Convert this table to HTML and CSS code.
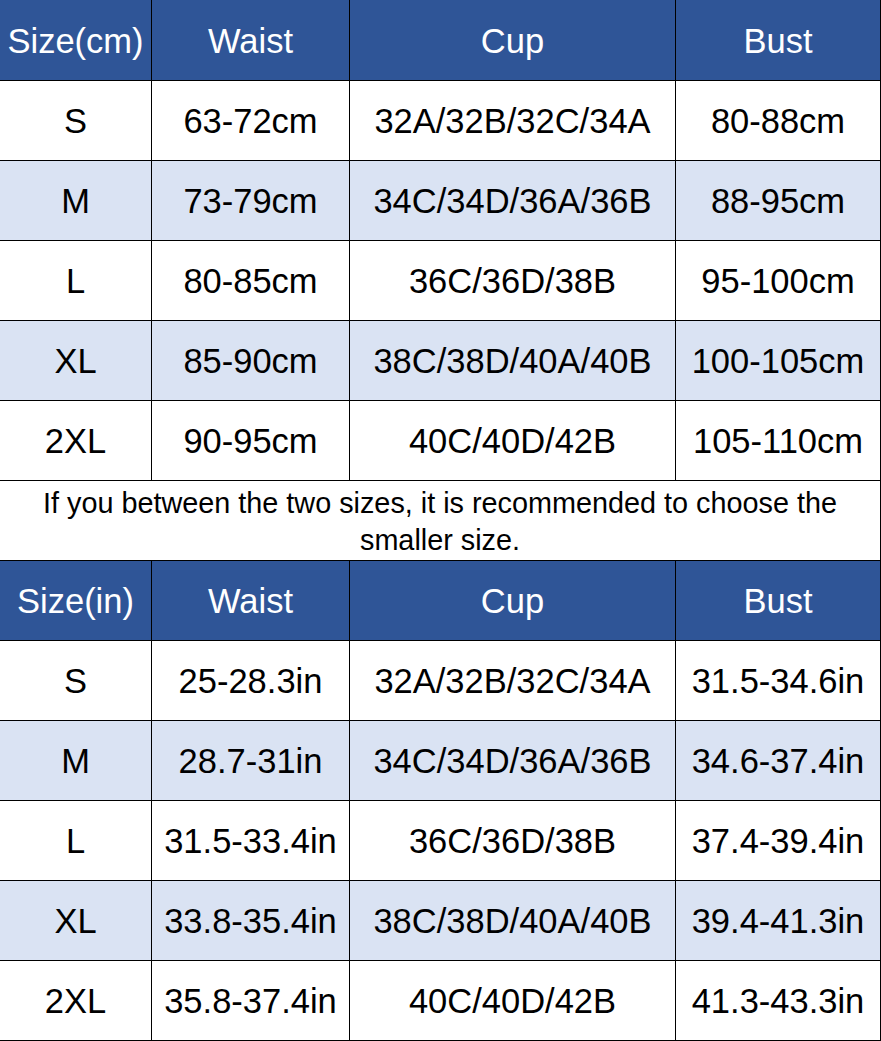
FILE: index.html
```html
<!DOCTYPE html>
<html>
<head>
<meta charset="utf-8">
<link rel="stylesheet" href="styles.css">
</head>
<body>
<div class="chart">
  <div class="row head">
    <div class="cell">Size(cm)</div><div class="cell">Waist</div><div class="cell">Cup</div><div class="cell">Bust</div>
  </div>
  <div class="row">
    <div class="cell">S</div><div class="cell">63-72cm</div><div class="cell">32A/32B/32C/34A</div><div class="cell">80-88cm</div>
  </div>
  <div class="row alt">
    <div class="cell">M</div><div class="cell">73-79cm</div><div class="cell">34C/34D/36A/36B</div><div class="cell">88-95cm</div>
  </div>
  <div class="row">
    <div class="cell">L</div><div class="cell">80-85cm</div><div class="cell">36C/36D/38B</div><div class="cell">95-100cm</div>
  </div>
  <div class="row alt">
    <div class="cell">XL</div><div class="cell">85-90cm</div><div class="cell">38C/38D/40A/40B</div><div class="cell">100-105cm</div>
  </div>
  <div class="row">
    <div class="cell">2XL</div><div class="cell">90-95cm</div><div class="cell">40C/40D/42B</div><div class="cell">105-110cm</div>
  </div>
  <div class="note">If you between the two sizes, it is recommended to choose the smaller size.</div>
  <div class="row head">
    <div class="cell">Size(in)</div><div class="cell">Waist</div><div class="cell">Cup</div><div class="cell">Bust</div>
  </div>
  <div class="row">
    <div class="cell">S</div><div class="cell">25-28.3in</div><div class="cell">32A/32B/32C/34A</div><div class="cell">31.5-34.6in</div>
  </div>
  <div class="row alt">
    <div class="cell">M</div><div class="cell">28.7-31in</div><div class="cell">34C/34D/36A/36B</div><div class="cell">34.6-37.4in</div>
  </div>
  <div class="row">
    <div class="cell">L</div><div class="cell">31.5-33.4in</div><div class="cell">36C/36D/38B</div><div class="cell">37.4-39.4in</div>
  </div>
  <div class="row alt">
    <div class="cell">XL</div><div class="cell">33.8-35.4in</div><div class="cell">38C/38D/40A/40B</div><div class="cell">39.4-41.3in</div>
  </div>
  <div class="row">
    <div class="cell">2XL</div><div class="cell">35.8-37.4in</div><div class="cell">40C/40D/42B</div><div class="cell">41.3-43.3in</div>
  </div>
</div>
</body>
</html>
```

FILE: styles.css
```css
html, body {
  margin: 0;
  padding: 0;
  background: #ffffff;
}
body {
  width: 881px;
  height: 1041px;
  overflow: hidden;
  font-family: "Liberation Sans", Arial, sans-serif;
  color: #000;
}
.chart {
  width: 881px;
  display: flex;
  flex-direction: column;
}
.row {
  display: grid;
  grid-template-columns: 152px 198px 326px 205px;
  height: 80px;
  background: #ffffff;
}
.row.alt {
  background: #dae3f3;
}
.row.head {
  background: #2f5597;
  color: #ffffff;
}
.chart > .row:first-child {
  height: 81px;
}
.cell {
  display: flex;
  align-items: center;
  justify-content: center;
  font-size: 34.5px;
  border-right: 1px solid #000;
  border-bottom: 1px solid #000;
  box-sizing: border-box;
  padding-top: 2px;
  white-space: nowrap;
}
.note {
  height: 80px;
  box-sizing: border-box;
  border-right: 1px solid #000;
  border-bottom: 1px solid #000;
  display: flex;
  align-items: center;
  justify-content: center;
  text-align: center;
  font-size: 28.8px;
  line-height: 37px;
  padding: 2px 8px 0;
}
```
